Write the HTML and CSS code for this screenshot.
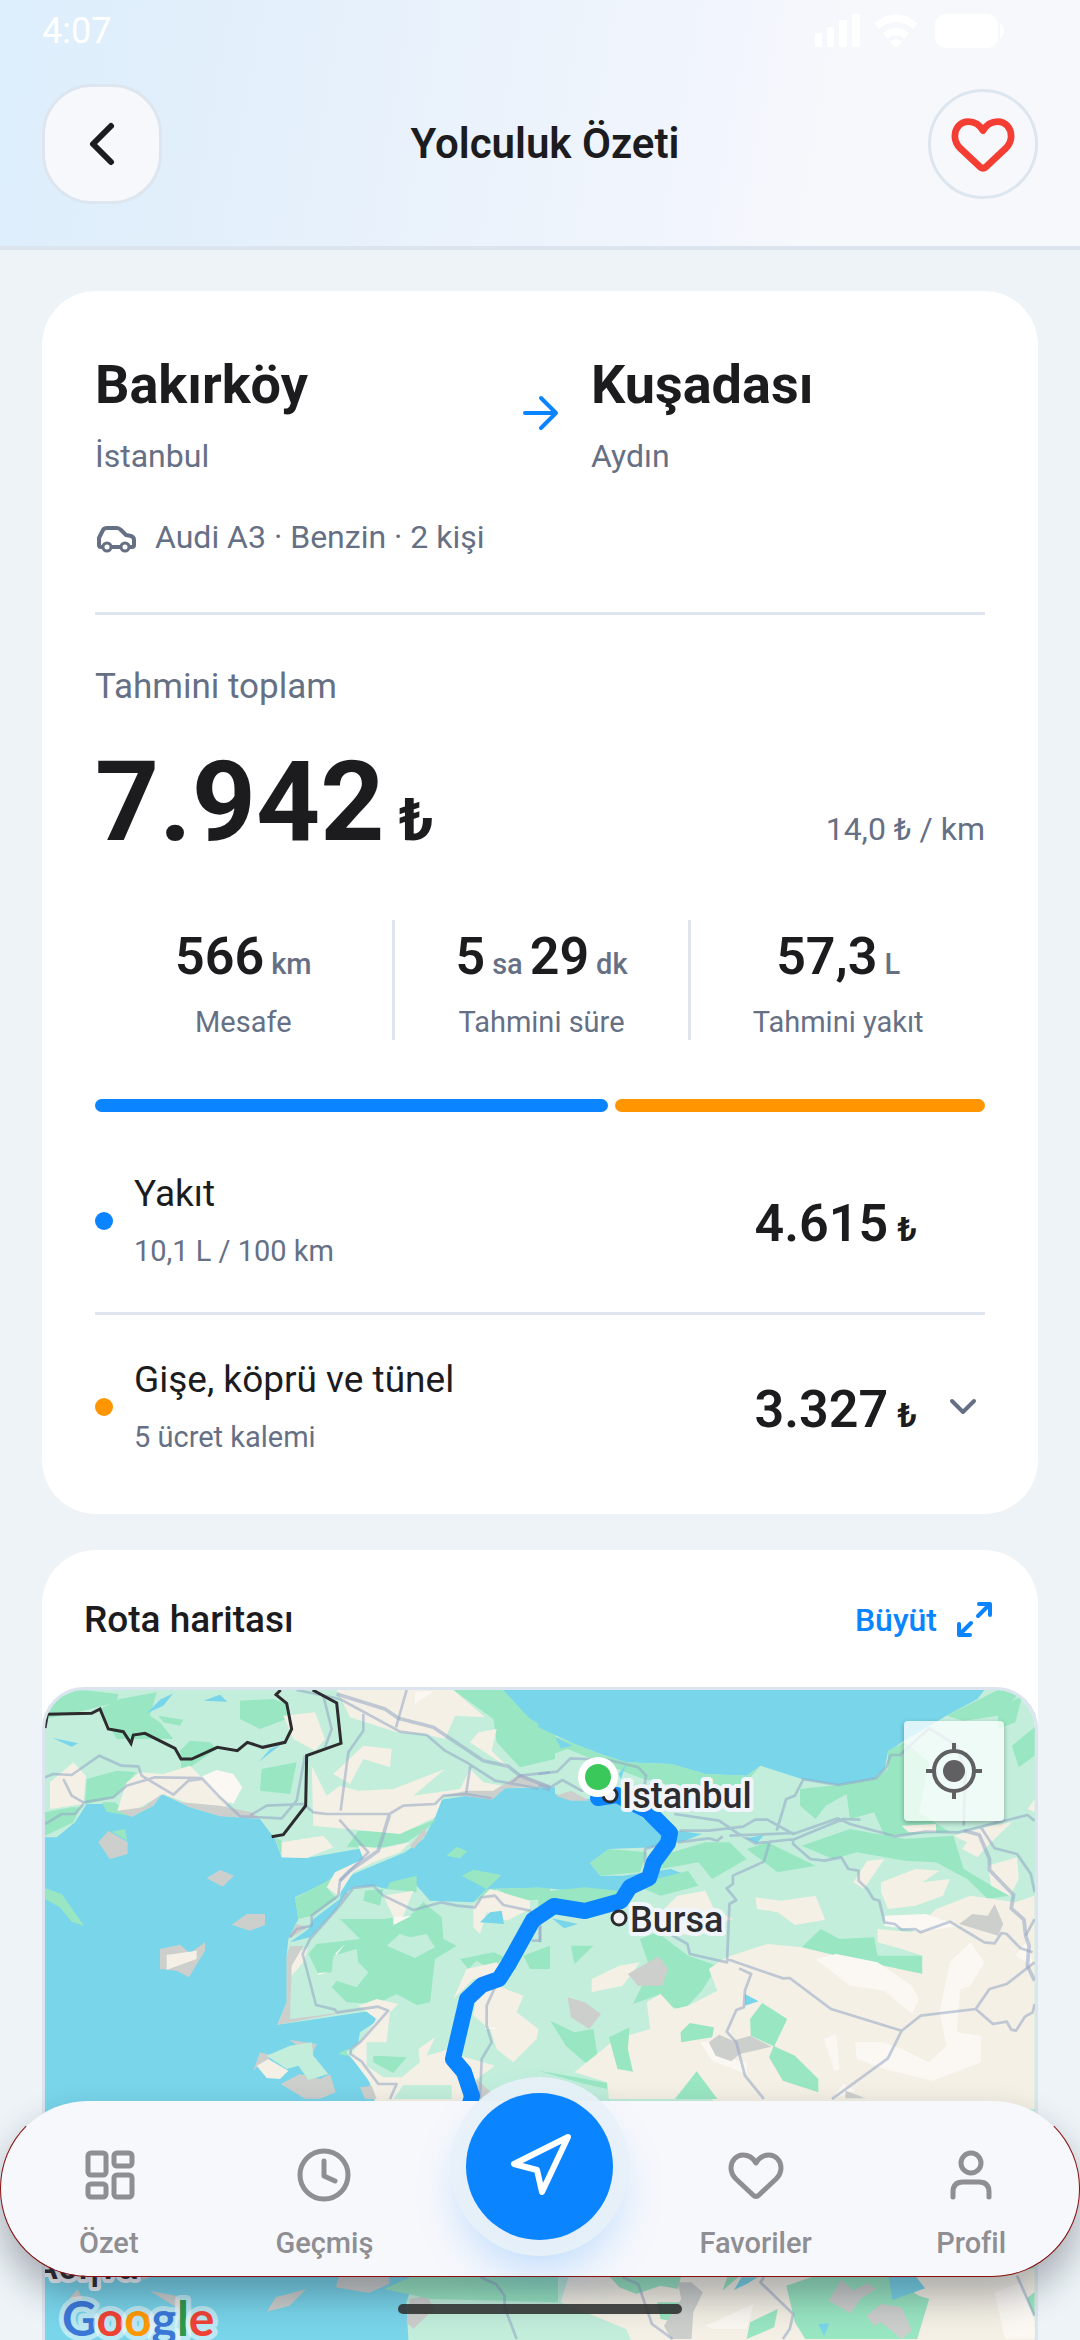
FILE: index.html
```html
<!DOCTYPE html>
<html lang="tr">
<head>
<meta charset="utf-8">
<meta name="viewport" content="width=device-width, initial-scale=1">
<title>Yolculuk Özeti</title>
<link rel="stylesheet" href="styles.css">
</head>
<body>
<div class="app">
  <header class="header">
    <div class="status">
      <span>4:07</span>
      <svg class="status-icons" viewBox="0 0 192 36" width="192" height="36" aria-hidden="true">
        <g fill="#fff">
          <rect x="1" y="20" width="7" height="14" rx="2"/><rect x="13" y="14" width="7" height="20" rx="2"/><rect x="25" y="7" width="8" height="27" rx="2"/><rect x="38" y="1" width="8" height="33" rx="2"/>
          <path d="M82 35l-6-6q6-5 12 0z"/>
          <rect x="121" y="1" width="63" height="34" rx="11"/><path d="M186 10q4 3 4 8t-4 8z"/>
        </g>
        <g fill="none" stroke="#fff" stroke-width="7"><path d="M63 13q19-16 38 0"/><path d="M71 23q11-9 22 0"/></g>
      </svg>
    </div>
    <div class="topbar">
      <button class="back" aria-label="Geri"><svg viewBox="0 0 54 54" width="54" height="54"><path d="M36 9L18 27l18 18" fill="none" stroke="#1c1c1e" stroke-width="6" stroke-linecap="round" stroke-linejoin="round"/></svg></button>
      <h1>Yolculuk Özeti</h1>
      <button class="like" aria-label="Favorilere ekle"><svg viewBox="0 0 64 64" width="72" height="72"><path class="line" d="M32 20C28 13 23 12 19 12C12 12 7 18 7 25C7 29 9 33 12 36L29 52Q32 55 35 52L52 36C55 33 57 29 57 25C57 18 52 12 45 12C41 12 36 13 32 20Z"/></svg></button>
    </div>
  </header>

  <main class="content">
    <section class="card summary">
      <div class="route">
        <div><h2>Bakırköy</h2><p>İstanbul</p></div>
        <svg viewBox="0 0 48 48" width="48" height="48" aria-hidden="true"><path d="M9 26h30M25 11l15 15-15 15" fill="none" stroke="#0a84ff" stroke-width="4" stroke-linecap="round" stroke-linejoin="round"/></svg>
        <div><h2>Kuşadası</h2><p>Aydın</p></div>
      </div>
      <div class="vehicle">
        <svg viewBox="0 0 42 42" width="42" height="42" aria-hidden="true"><g fill="none" stroke="#667085" stroke-width="4" stroke-linejoin="round"><path d="M8 31H6Q4 31 4 29V22L8 14Q9 12 12 12H22Q24 12 26 14L31 19L36 20Q39 21 39 24V29Q39 31 37 31H34M17 31h8"/><circle cx="12" cy="31" r="4" stroke-width="3"/><circle cx="30" cy="31" r="4" stroke-width="3"/></g></svg>
        <span>Audi A3 · Benzin · 2 kişi</span>
      </div>
      <hr>
      <p class="total-label">Tahmini toplam</p>
      <div class="total">
        <strong>7.942<small>₺</small></strong>
        <span>14,0 ₺ / km</span>
      </div>
      <div class="stats">
        <div class="stat"><b>566<small>km</small></b><span>Mesafe</span></div>
        <div class="stat"><b>5<small>sa</small>29<small>dk</small></b><span>Tahmini süre</span></div>
        <div class="stat"><b>57,3<small>L</small></b><span>Tahmini yakıt</span></div>
      </div>
      <div class="split"><i class="fuel" style="flex-grow:4615"></i><i class="toll" style="flex-grow:3327"></i></div>
      <div class="cost">
        <i class="dot fuel"></i>
        <div class="cost-name"><h3>Yakıt</h3><p>10,1 L / 100 km</p></div>
        <b class="amount">4.615<small>₺</small></b>
        <span class="slot"></span>
      </div>
      <hr>
      <div class="cost last">
        <i class="dot toll"></i>
        <div class="cost-name"><h3>Gişe, köprü ve tünel</h3><p>5 ücret kalemi</p></div>
        <b class="amount">3.327<small>₺</small></b>
        <button class="slot" aria-label="Ücretleri göster"><svg viewBox="0 0 44 44" width="44" height="44"><path d="M11 16l11 11 11-11" fill="none" stroke="#667085" stroke-width="4" stroke-linecap="round" stroke-linejoin="round"/></svg></button>
      </div>
    </section>

    <section class="card map-card">
      <div class="map-head">
        <h2>Rota haritası</h2>
        <button class="expand">Büyüt
          <svg viewBox="0 0 43 43" width="43" height="43" aria-hidden="true"><path d="M26 6h11v11M37 6L25 18M17 37H6V26M6 37l12-12" fill="none" stroke="#0a84ff" stroke-width="4" stroke-linecap="round" stroke-linejoin="round"/></svg>
        </button>
      </div>
      <div class="map">
        <svg class="map-art" viewBox="45 1691 990 700" role="img" aria-label="Bakırköy – Kuşadası rotası">
          <rect x="45" y="1691" width="990" height="700" fill="#c2eedb"/>
          <!-- western half -->
          <g transform="translate(30 1680) scale(.33333)">
            <path class="sea" d="M45 475L80 475 135 430 170 375 225 375 305 413 370 380 395 345 480 385 570 410 690 420 735 480 755 535 830 537 1000 507 1000 540 930 575 890 610 795 655 805 720 775 780 770 830 770 970 742 1037 1040 993 1035 1030 990 1060 985 1090 945 1120 1000 1170 1040 1260 1040 1400H45Z"/>
            <path class="sea" d="M1235 362L1310 350 1385 362 1425 328 1575 325V625L1370 630 1330 670 1200 665 1160 620 1070 630 1030 620 970 625 945 645 920 690 840 775 780 790 835 750 850 720 930 660 935 610 970 585 1125 520 1180 480 1215 415ZM1420 33h155v130L1500 120 1440 65Z"/>
            <path class="wood" d="M45 33L155 33 265 45 260 70 160 95 45 120ZM270 60L380 40 360 110 390 130 430 180 260 180 210 90ZM385 110L460 122 450 140 400 130ZM630 65L730 60 770 75 770 120 690 150 630 120ZM450 215L480 185 540 190 560 210 455 282ZM170 300L260 275 320 280 250 355 165 375ZM695 270L800 250 780 345 690 335ZM45 400L125 385 150 385 130 430 45 470ZM215 370L255 370 305 412 230 398ZM950 505L985 455 1075 460 1120 460 1220 420 1190 450 1130 490 1060 505ZM1270 33L1420 33 1500 120 1575 160V240L1470 265 1400 190 1390 120ZM45 628L95 645 162 740 125 728 90 685 45 660ZM795 658L920 590 890 625 920 660 845 710 805 720ZM1080 610L1160 590V640L1070 630ZM1295 590L1330 572 1415 588 1370 630ZM1330 670L1370 630 1560 625V660L1470 665 1400 630ZM1005 635L1060 630 1050 680 1000 665ZM930 720L1060 720 1140 710 1180 670 1235 715 1240 780 1280 800 1215 840 1200 970 1160 978 1100 945 1040 975 950 970 905 925 920 905 980 925 1015 880 985 850 980 810 910 830 905 880 865 885 835 825 860 795 990 780 960 750ZM1290 840L1390 820 1425 835 1380 870 1340 845 1315 870ZM1030 1130L1130 1135 1090 1182 1030 1150ZM1480 830L1560 800V870L1500 870ZM735 475L755 485V530ZM1250 530L1280 503 1312 517 1290 538ZM925 1125L950 1110 950 1130Z"/>
            <path class="land" d="M60 310L130 250 168 290 160 375 60 390ZM290 310L330 280 520 295 600 370 570 395 480 375 400 345 305 400 262 395ZM400 285L480 260 520 300ZM760 110L855 100 885 180 855 215 790 180ZM920 33L1270 33 1365 115 1275 110 1245 180 1180 165 1100 160 960 115ZM1345 160L1400 150 1385 215 1440 270 1320 190ZM845 260L890 350 930 320 985 335 1090 330 1245 270 1150 350 1290 330 1320 270 1360 310 1420 320 1385 340 1240 350 1215 415 1110 465 850 440ZM910 285L1000 200 1085 210 1080 265 1000 240 960 315ZM755 490L880 470 910 505 830 537 755 535ZM985 500L1050 510 1140 490 1110 520 1030 550 970 580 925 650 890 625 915 580 1000 540ZM1060 650L1150 635 1120 710 1100 735ZM1330 680L1380 630 1500 665 1500 690 1430 725 1370 700 1350 765 1330 745ZM780 830L835 805 820 850 785 890ZM1270 960L1310 870 1400 850 1420 895 1330 900ZM1390 915L1480 950 1460 1000 1525 1050 1520 1080 1450 1150 1400 1110 1380 1050 1330 1010 1345 920ZM985 980L1040 960 1105 975 1080 1000 1070 1090 1010 1090 1010 1160 1060 1195 1115 1195 1170 1150 1165 1110 1215 1075 1190 1130 1290 1100 1290 1130 1395 1160 1340 1200 1330 1290 1040 1290 1020 1210 960 1130 1040 1020Z"/>
            <path class="pale" d="M510 295L560 273 610 285 637 325 610 375 560 350ZM1155 40L1212 35 1155 75ZM1090 715L1145 710 1090 738ZM915 825l30-30-25 32ZM865 888l30-8-30 2ZM1365 1050h32v-4h-32Z"/>
            <path class="rock" d="M205 490L235 455 293 490V525L240 540ZM530 598L570 573 612 590 578 623ZM605 737L650 705H705V738L660 755ZM390 810L450 797 480 822 525 790V815L477 895 440 875 390 870ZM670 1175L690 1120 730 1130 690 1155ZM752 1215L810 1185 870 1200 900 1185 917 1240 870 1259 825 1259ZM778 1082L860 1095 845 1130ZM395 345L455 370 570 380 665 400 690 418 570 412 480 385ZM305 413L262 395 340 385 395 345 370 380ZM780 802L820 800 785 860 780 1020 860 1010 1000 990 742 1037 770 970V830ZM775 780L800 735 835 745ZM1240 350L1310 335 1390 335 1470 285 1560 320 1425 328 1385 362 1310 352ZM1140 500L1185 445 1190 465 1150 510ZM990 1225L1025 1220 1040 1260H1005ZM1340 1200L1395 1250 1340 1260Z"/>
            <path class="green" d="M710 1130L780 1100 845 1090 850 1130 895 1185 835 1203 805 1160 770 1170ZM1120 1218H1265V1260H1090ZM1070 800L1110 765 1140 775 1190 765 1215 805 1155 837Z"/>
            <path class="land" d="M410 828L500 815V840L410 872ZM680 1160L715 1140 775 1175 750 1200 710 1197Z"/>
            <path class="wood" d="M245 458L285 450 292 485Z"/>
            <path class="sea" d="M350 103L390 62 430 43 400 80ZM520 65L570 47 592 68ZM68 177L145 193 125 203ZM687 248L720 210 752 197ZM1350 730L1380 700 1415 695 1422 735Z"/>
            <path class="road" d="M45 295L70 285 125 288 208 230 275 260 325 262 335 290 430 347 475 305 515 300 M100 300L125 350 160 370 250 355 290 320 375 295 515 297 570 355 630 412 755 418 800 365 825 230 M45 435L95 405 135 405 160 375 M660 410L710 380 820 375 850 400 890 405H1078L1120 380 1215 375 1240 350 1310 345 1385 358 M880 50L905 150 885 205 M800 33L930 60 1110 158 1190 168 1245 215 1310 250 1395 305 1470 318 1560 335 M1000 105V155L955 220 932 395 M928 422L1015 520 930 605 925 650 M925 685L950 640 M1130 33L1098 145 M1322 255L1308 345 M920 1000L915 992 858 978 818 825 840 780 925 685 970 627 1030 620 1060 650 1150 693 1235 670 1280 680 1335 685 1355 655 1395 650 1420 678 1500 695 1530 740V785H1505 M780 775L800 750 845 740V710L925 650 M920 1000L1045 983 1075 995 990 1090 962 1110V1125L995 1148 1045 1215H1100L1080 1260 M1395 925L1370 980V1040L1385 1090 1355 1140 1350 1260 M1440 315L1470 290 1560 280"/>
            <path class="road main" d="M920 45L1065 90 1105 118 1210 145 1360 245 1435 262 1470 290 1560 325 M1078 408L1045 515 960 575 930 605"/>
            <path class="frontier" d="M45 147L52 106 185 103 210 90 235 150 280 158 303 193 310 168 345 163 435 208 453 240H485L562 205 622 215 652 190 698 205 765 190 785 150 770 73 738 47 752 33 M848 33L920 72 933 193 830 230 827 380 760 467 725 473"/>
          </g>
          <!-- eastern half -->
          <g transform="translate(540 1680) scale(.34444 .33333)">
            <path class="sea" d="M-5 33H1290L1270 60 1180 110 1050 190 1010 220 1000 270 970 300 865 318 760 300 640 260 600 290 480 285 380 255 250 250 175 225 100 195-5 145Z"/>
            <path class="sea" d="M-5 325L70 355 140 360 230 375 270 395 340 450 400 455 470 465 420 485 330 505 200 510 145 552 175 590 240 590 380 570 430 590 440 620 340 610 270 640 130 640-5 625Z"/>
            <path class="wood" d="M-5 145L40 170 175 225 250 250 380 255 480 285 600 290 640 260 590 320 430 330 300 300 200 260 80 210-5 240ZM755 330L865 318 970 300 1010 270 1010 215 1060 190 1130 250 1100 400 1190 460 1000 470 970 400 900 420 890 345 830 380 800 420 755 380ZM1180 110L1330 33 1400 33 1330 110 1230 125ZM1370 200L1436 145V230L1390 265ZM145 552L200 510 310 520 290 580 175 590ZM300 610L430 575 460 620 350 650 290 625ZM350 530L480 490 550 490 600 540 500 600 460 550 350 570ZM600 510L660 490 800 560 690 580ZM760 500L900 450 1060 480 1200 470 1230 570 1360 650 1300 660 1240 600 1150 550 1060 545 920 520 850 540ZM760 805L815 750 870 780 970 775 980 830 1110 830V885L1000 860 860 830ZM90 800H155L100 855ZM290 780L340 760 430 830 515 860 470 935 420 990 380 985 350 945 270 975 320 870ZM30 1025L100 1060 155 1050 170 1150 130 1150 75 1100ZM-5 1175L80 1190 195 1212V1230L130 1215ZM-5 640L130 625 270 640 200 680-5 690ZM1330 90L1400 50 1380 130 1330 150Z"/>
            <path class="land" d="M625 655L700 665 800 650 828 722 740 738 690 700 630 690ZM910 610L950 545 1000 540 940 630ZM990 610L1090 570 1160 575 1110 610 1190 600 1170 650 1090 680 1010 690 990 640ZM1200 470L1310 440 1370 430 1300 500 1270 535 1225 510 1240 490ZM360 690L400 650 480 635 505 690 560 720 500 740 440 770 390 760ZM1415 390L1436 360V400ZM150 900L230 860 290 850 240 920 150 940ZM540 835L660 795 760 805 860 830 1110 885 1110 830 1050 810 980 790V750L1080 760 1150 690 1250 650 1380 670 1436 650V1290H515L455 1177 390 1260H200L195 1210 100 1180 220 1080 320 1050 310 970 350 945 390 990 430 980 515 935 490 870ZM1300 560L1385 535 1390 600 1365 650 1310 620ZM1050 440L1150 435 1150 460 1070 460Z"/>
            <path class="pale" d="M800 840L860 825 980 850 1080 920 1100 960 1080 1005 1000 935 900 920ZM1190 850L1250 790 1290 850 1250 920 1220 930 1210 1060 1280 1070 1280 1150 1140 1205 1000 1170 920 1140 915 1090 1000 1090 1050 1110 1130 1150 1180 1100 1160 1000ZM1000 710L1120 705 1220 740 1160 750 1100 755 1000 740ZM825 1080L860 1065 870 1170 855 1178ZM465 1090L500 1085 510 1130 600 1150 600 1185 500 1145ZM850 1260L880 1215 915 1235ZM1380 830L1420 780 1430 860Z"/>
            <path class="rock" d="M255 885L345 832 372 870 355 920H285ZM80 955L130 970 177 1005 143 1050 90 1015ZM490 1090L520 1067 560 1085 610 1070 672 1103 580 1125 555 1147 510 1130ZM1217 735L1255 705 1300 710 1320 675 1345 735 1330 770ZM45 350L90 335 145 365 90 365ZM887 1235L945 1258H887Z"/>
            <path class="wood" d="M610 1020L645 972 718 1020 680 1102 740 1130 808 1200V1240L705 1205 665 1135 678 1102 612 1070ZM408 1060L435 1032 505 1045 500 1075 410 1090ZM393 1260L455 1177 515 1260ZM200 1075L260 1045 255 1110 270 1178 225 1170Z"/>
            <path class="sea" d="M35 718L110 735 70 748ZM600 478L650 468 630 492ZM595 945L635 967 595 980ZM45 175L95 200 60 208ZM250 255L235 300 228 285Z"/>
            <path class="road" d="M-5 285L50 278 88 238 200 243 285 265 308 290 300 340 M-5 320L30 325 65 303 120 335 150 330 M765 300L740 350 715 360 687 455 M760 300L865 318 975 298 1005 265 1018 228 1045 228 1130 148 1210 200 1235 280 1230 440 M390 405L520 425 570 460 625 493 740 480 880 420 930 422 M405 455H490L590 443 625 422H660L735 465 865 418 900 435 1030 472 1120 458 1215 460 1415 408 1436 425 M400 490L490 478 515 485 530 472 M550 470L740 462 M668 485L650 548 560 590V615L542 628 570 663 550 675 543 850 435 825 428 795 360 755 M735 480V495L785 540 825 545 875 535 895 570 925 575V605L950 630 968 660 985 665 1000 730 1030 735 1050 752 1090 750 1105 760 1190 728 1290 790 1320 793 1340 762 1355 765 1395 808 1430 820 M1280 445L1320 508 1385 525 1425 585 1436 640 M543 840L705 898 725 897 845 990 1050 1055 1010 1138 848 1260 M578 868L613 885 595 935 592 985 570 993 542 1058 570 1090 595 1190 650 1260 M1050 1055L1105 1010 1265 990 1305 930 1355 915 1436 850 M1265 990L1315 1035 1355 1028 1368 1052 1382 1055 1408 1013 1430 1000 1436 975 M305 560V510L345 497 M1410 770L1436 720 M0 790V740"/>
            <path class="road main" d="M1230 455L1275 467 1305 540V573L1375 648 1368 688 1405 722 1410 770 1420 800 1415 860 1436 905"/>
          </g>
          <!-- strip below the tab bar -->
          <g transform="translate(0 2070) scale(.34444 .33333)">
            <path class="sea" d="M100 180H1150L1200 640 1180 700 1190 900H100Z"/>
            <path class="rock" d="M435 665L510 680 530 700 520 720ZM775 728L800 685 890 660 840 710ZM985 620H1130V645L1070 672 975 655ZM410 620H445L415 632ZM200 690L225 660 240 690ZM1180 760L1190 690 1240 680 1260 720 1200 780Z"/>
            <path class="wood" d="M1115 660L1200 620H1620V700L1250 690Z"/>
            <path class="road" d="M1395 625L1440 645 1465 680V715L1500 810"/>
          </g>
          <g transform="translate(540 2070) scale(.34444 .33333)">
            <path class="land" d="M90 600H1436V960H330L250 780 60 700Z"/>
            <path class="wood" d="M200 620H410L400 660 350 650 280 675 230 655ZM545 620H580L530 665ZM715 650L800 620H1010L1100 680 1130 690 1095 810H770L740 760ZM610 760L690 720 680 775 600 810ZM340 700L410 700 400 760 350 750ZM1410 690L1436 670V740Z"/>
            <path class="rock" d="M400 640H440L473 670 445 730 440 810H380L360 770 410 690ZM838 695L875 632 910 665 950 643 975 660 930 690 902 733ZM948 740L990 705 1050 715 1080 785 1050 810 990 760 970 770Z"/>
            <path class="pale" d="M480 770L620 705 600 780 500 780ZM1320 670L1400 640 1436 760V810H1350Z"/>
            <path class="sea" d="M563 663L585 625H632L600 645ZM1012 620H1090L1118 658 1023 693ZM808 765L840 762 825 802Z"/>
            <path class="road" d="M240 625L285 645 325 765 385 810 M650 625L640 640 735 735 725 780 705 810 M1385 620L1436 740"/>
          </g>
          <path class="track" d="M598 1799L617 1796 648 1812 670 1834 668 1844 654 1863 649 1879 630 1888 621 1902 585 1912 554 1907 533 1921 508 1966 499 1980 482 1986 467 2000 453 2060 464 2073 472 2097 463 2130"/>
          <g fill="#f3f3f5" stroke="#2b2b2e" stroke-width="3"><circle cx="610" cy="1796" r="7"/><circle cx="619" cy="1919" r="7"/></g>
          <circle cx="598" cy="1778" r="20" fill="#fff"/><circle cx="598" cy="1778" r="13" fill="#3ac85b"/>
          <g class="places"><text x="622" y="1809">Istanbul</text><text x="630" y="1933">Bursa</text><text x="34" y="2280">Αθήνα</text></g>
          <text class="google" x="62" y="2337"><tspan fill="#3c78d8">G</tspan><tspan fill="#f04336">o</tspan><tspan fill="#ff9900">o</tspan><tspan fill="#3c78d8">g</tspan><tspan fill="#2f9a4b">l</tspan><tspan fill="#f04336">e</tspan></text>
        </svg>
        <button class="locate" aria-label="Konumum"><svg viewBox="0 0 60 60" width="60" height="60"><g fill="none" stroke="#606063" stroke-width="4"><circle cx="30" cy="30" r="20"/><path d="M30 2v9M30 49v9M2 30h9M49 30h9"/></g><circle cx="30" cy="30" r="11" fill="#606063"/></svg></button>
      </div>
    </section>
  </main>

  <nav class="tabs">
    <a href="#ozet"><svg viewBox="0 0 64 64" width="64" height="64"><g class="line"><rect x="11" y="10" width="18" height="22" rx="3"/><rect x="37" y="10" width="18" height="13" rx="3"/><rect x="37" y="32" width="18" height="22" rx="3"/><rect x="11" y="41" width="18" height="13" rx="3"/></g></svg>Özet</a>
    <a href="#gecmis"><svg viewBox="0 0 64 64" width="64" height="64"><g class="line"><circle cx="32" cy="32" r="24"/><path d="M32 18v15l11 5"/></g></svg>Geçmiş</a>
    <a class="go" href="#yeni" aria-label="Yeni yolculuk"><svg viewBox="0 0 147 147" width="147" height="147"><path d="M102 44L48 71l23 6 5 22z" fill="none" stroke="#fff" stroke-width="6" stroke-linecap="round" stroke-linejoin="round"/></svg></a>
    <a href="#favoriler"><svg viewBox="0 0 64 64" width="64" height="64"><path class="line" d="M32 20C28 13 23 12 19 12C12 12 7 18 7 25C7 29 9 33 12 36L29 52Q32 55 35 52L52 36C55 33 57 29 57 25C57 18 52 12 45 12C41 12 36 13 32 20Z"/></svg>Favoriler</a>
    <a href="#profil"><svg viewBox="0 0 64 64" width="64" height="64"><g class="line"><circle cx="32" cy="20" r="10"/><path d="M14 54v-5q0-10 10-10h16q10 0 10 10v5"/></g></svg>Profil</a>
  </nav>
  <div class="home-bar"></div>
</div>
</body>
</html>
```
FILE: styles.css
```css
* { box-sizing: border-box; }
body { margin: 0; background: #edf3f7; color: #1c1c1e; font-family: Roboto, sans-serif; }
h1, h2, h3, p { margin: 0; }
button { padding: 0; border: 0; background: none; font: inherit; color: inherit; }
svg { display: block; flex: none; }
.app { display: flex; flex-direction: column; height: 100vh; overflow: hidden; position: relative; }

.header { flex: none; border-bottom: 4px solid #dce4ef; background: linear-gradient(100deg, #ddeefc 0%, #e1effb 18%, #eaf2fb 42%, #f2f5fd 66%, #f7f8fc 76%); }
.status { display: flex; justify-content: space-between; align-items: center; height: 62px; padding: 0 74px 0 42px; color: #fff; font-size: 36px; line-height: 62px; }
.topbar { display: flex; justify-content: space-between; align-items: center; padding: 22px 42px 42px; }
.topbar h1 { font-size: 42px; line-height: 56px; font-weight: 600; }
.back, .like { display: grid; place-items: center; border: 3px solid #dde5ee; background: #f7f8fc; }
.back { width: 120px; height: 120px; border-radius: 50px; }
.like { width: 110px; height: 110px; border-radius: 50%; color: #f43d33; }
.line { fill: none; stroke: currentColor; stroke-width: 5; stroke-linecap: round; stroke-linejoin: round; }
.like .line { stroke-width: 6; }

.content { flex: 1; min-height: 0; overflow-y: auto; scrollbar-width: none; padding: 41px 42px 0; display: flex; flex-direction: column; gap: 36px; }
.card { flex: none; background: #fff; border-radius: 54px; }
.summary { padding: 53px; }
.summary hr { height: 3px; margin: 0; border: 0; background: #dfe6ef; }
.route { display: grid; grid-template-columns: 1fr 48px 1fr; gap: 27px; align-items: center; }
.route h2 { font-size: 54px; line-height: 82px; font-weight: 700; }
.route p { margin-top: 8px; font-size: 32px; line-height: 44px; color: #667085; }
.vehicle { display: flex; align-items: center; gap: 18px; margin: 38px 0 54px; font-size: 32px; line-height: 42px; color: #667085; }
.total-label { margin-top: 50px; font-size: 35px; line-height: 44px; color: #667085; }
.total { display: flex; justify-content: space-between; align-items: baseline; margin-top: 26px; color: #1c1c1e; }
.total strong { display: flex; align-items: baseline; gap: 14px; font-size: 112px; line-height: 134px; font-weight: 700; }
.total small { font-size: 60px; line-height: 60px; }
.total span { font-size: 32px; line-height: 44px; color: #667085; }
.stats { display: grid; grid-template-columns: repeat(3, 1fr); margin-top: 51px; }
.stat { display: flex; flex-direction: column; gap: 15px; align-items: center; padding-top: 5px; }
.stat + .stat { border-left: 3px solid #dfe6ef; }
.stat b { display: flex; align-items: baseline; gap: 7px; font-size: 52px; line-height: 64px; font-weight: 600; }
.stat small { font-size: 29px; line-height: 36px; font-weight: 500; color: #667085; }
.stat span { font-size: 29px; line-height: 36px; color: #667085; }
.split { display: flex; gap: 7px; height: 13px; margin: 59px 0 17px; }
.split i { flex-basis: 0; border-radius: 7px; }
.fuel { background: #0a84ff; }
.toll { background: #ff9500; }
.cost { display: flex; align-items: center; padding: 43px 0; }
.cost.last { padding-bottom: 6px; }
.dot { width: 18px; height: 18px; border-radius: 50%; }
.cost-name { flex: 1; margin-left: 21px; }
.cost h3 { font-size: 37px; line-height: 44px; font-weight: 400; }
.cost p { margin-top: 17px; font-size: 29px; line-height: 36px; color: #667085; }
.amount { display: flex; align-items: baseline; gap: 9px; padding-top: 6px; font-size: 52px; line-height: 64px; font-weight: 600; }
.amount small { font-size: 34px; line-height: 44px; }
.slot { width: 44px; margin-left: 24px; }

.map-head { display: flex; justify-content: space-between; align-items: center; min-height: 137px; padding: 2px 42px 0; }
.map-head h2 { font-size: 37px; line-height: 44px; font-weight: 500; }
.expand { display: flex; align-items: center; gap: 16px; color: #0a84ff; font-size: 32px; line-height: 44px; font-weight: 500; }
.map { position: relative; border: 3px solid #dce4ef; border-radius: 42px; overflow: hidden; }
.map-art { width: 100%; height: auto; }
.sea { fill: #79d5ea; }
.wood { fill: #99e6c2; }
.green { fill: #c2eedb; }
.land { fill: #f4f0e5; }
.pale { fill: #fbf8f3; }
.rock { fill: #cdcfcd; }
.road { fill: none; stroke: #94a5c4; stroke-opacity: .55; stroke-width: 8; stroke-linejoin: round; }
.road.main { stroke-width: 11; }
.frontier { fill: none; stroke: #2c2c2f; stroke-width: 9; }
.track { fill: none; stroke: #0a84ff; stroke-width: 16; stroke-linejoin: round; stroke-linecap: round; }
.places text { font: 500 36px Roboto, sans-serif; fill: #2d2d30; stroke: #f0f5fb; stroke-width: 8px; stroke-linejoin: round; paint-order: stroke; }
.google { font: 700 48px Lato, sans-serif; stroke: rgba(255, 255, 255, .5); stroke-width: 10px; stroke-linejoin: round; paint-order: stroke; }
.locate { position: absolute; top: 31px; right: 31px; width: 100px; height: 100px; display: grid; place-items: center; border-radius: 4px; background: rgba(255, 255, 255, .74); box-shadow: 0 2px 5px rgba(0, 0, 0, .3); }

.tabs { position: absolute; left: 0; right: 0; bottom: 63px; height: 177px; display: grid; grid-template-columns: repeat(5, 1fr); align-items: center; justify-items: center; border: 1px solid #8b1111; border-top-color: transparent; border-radius: 88px; background: #f7f8fc; background-clip: padding-box; box-shadow: 0 20px 36px rgba(20, 25, 40, .32); }
.tabs a { display: flex; flex-direction: column; align-items: center; gap: 18px; margin-top: 26px; color: #8e8e93; font-size: 29px; line-height: 36px; font-weight: 500; text-decoration: none; }
.tabs .go { align-self: start; margin-top: -8px; border-radius: 50%; background: #0a84ff; box-shadow: 0 0 0 16px rgba(232, 241, 248, .9), 0 24px 50px rgba(10, 132, 255, .3); }
.home-bar { position: absolute; bottom: 26px; left: 50%; width: 284px; height: 10px; margin-left: -142px; border-radius: 5px; background: rgba(45, 48, 48, .88); }
```
